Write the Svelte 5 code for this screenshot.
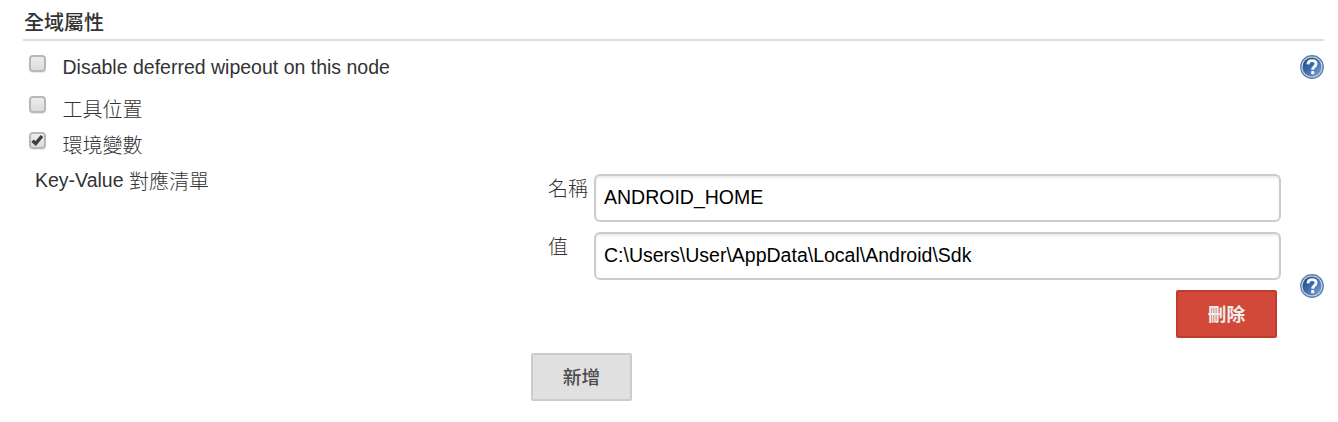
<script>
  let options = $state([
    { label: 'Disable deferred wipeout on this node', checked: false, help: true },
    { label: '工具位置', checked: false, help: false },
    { label: '環境變數', checked: true, help: false }
  ]);
  let name = $state('ANDROID_HOME');
  let value = $state('C:\\Users\\User\\AppData\\Local\\Android\\Sdk');
</script>

{#snippet helpIcon()}
  <svg class="help" width="24" height="24" viewBox="0 0 24 24">
    <defs>
      <linearGradient id="disc" x1="0" y1="0" x2="1" y2="1">
        <stop offset="0" stop-color="#1d4583" />
        <stop offset="0.45" stop-color="#3d68a6" />
        <stop offset="1" stop-color="#86a9d6" />
      </linearGradient>
    </defs>
    <circle cx="12" cy="12" r="11.9" fill="#5b80a8" />
    <circle cx="12" cy="12" r="10.6" fill="#c9d6e6" />
    <circle cx="12" cy="12" r="9.5" fill="url(#disc)" />
    <path d="M7.9 9.3C8.1 6.6 9.6 5.6 12.1 5.6c2.5 0 4 1.2 4 3.2 0 2.8-3.4 3-3.4 5.9" fill="none" stroke="#f4f7fb" stroke-width="2.9" />
    <rect x="11.1" y="16" width="3.2" height="3.2" rx=".9" fill="#f4f7fb" />
  </svg>
{/snippet}

<main>
  <h1>全域屬性</h1>

  {#each options as option}
    <div class="option">
      <label>
        <span class="box">
          <input type="checkbox" bind:checked={option.checked} />
          {#if option.checked}
            <svg class="tick" width="17" height="17" viewBox="0 0 17 17">
              <path d="M3.5 8.7 6.7 11.5 13 4" fill="none" stroke="#3e3e3e" stroke-width="3.4" />
            </svg>
          {/if}
        </span>
        <span class="text">{option.label}</span>
      </label>
      {#if option.help}{@render helpIcon()}{/if}
    </div>
  {/each}

  <section>
    <div class="title">Key-Value <span>對應清單</span></div>
    <div class="editor">
      <div class="field">
        <label for="name">名稱</label>
        <input id="name" type="text" bind:value={name} />
      </div>
      <div class="field">
        <label for="value">值</label>
        <input id="value" type="text" bind:value />
      </div>
      <button class="danger">刪除</button>
      <button class="add">新增</button>
    </div>
    <div class="aside">{@render helpIcon()}</div>
  </section>
</main>

<style>
  :global(body) {
    margin: 0;
    background: #fff;
  }
  main {
    box-sizing: border-box;
    height: 422px;
    padding: 0 14px 0 23px;
    overflow: hidden;
    color: #333;
    font: 19.5px/32px "Liberation Sans", "Noto Sans CJK TC", sans-serif;
  }
  h1 {
    box-sizing: border-box;
    height: 41px;
    margin: 0;
    padding: 7px 0 0 1px;
    border-bottom: 2px solid #ddd;
    font-size: 20px;
    font-weight: 500;
    line-height: 32px;
  }
  .option {
    display: flex;
    align-items: flex-start;
    justify-content: space-between;
    height: 36px;
  }
  .option:nth-of-type(1) {
    height: 41px;
    padding-top: 10px;
  }
  .option label {
    display: flex;
    padding-left: 6px;
  }
  .option:nth-of-type(n + 2) .text {
    padding-top: 2px;
    font-size: 20px;
    font-weight: 300;
  }
  .option:nth-of-type(1) .help {
    margin-top: 4px;
  }
  .box {
    position: relative;
    width: 17px;
    height: 17px;
    margin: 4px 16.5px 0 0;
  }
  .box input {
    appearance: none;
    display: block;
    box-sizing: border-box;
    width: 17px;
    height: 17px;
    margin: 0;
    border: 2px solid #b8b8b8;
    border-radius: 4px;
    background: linear-gradient(#ededed, #dcdcdc);
    box-shadow: 0 1px 1px #e8e8e8;
  }
  .tick {
    position: absolute;
    inset: 0;
    pointer-events: none;
  }
  section {
    display: flex;
    align-items: flex-start;
    padding-top: 10px;
  }
  .title {
    flex: 0 0 508px;
    box-sizing: border-box;
    padding: 0 0 0 12px;
    margin-top: -10px;
  }
  .title span {
    position: relative;
    top: 2px;
    font-size: 20px;
    font-weight: 300;
  }
  .editor {
    display: flex;
    flex: 0 0 750px;
    flex-direction: column;
    align-items: flex-start;
  }
  .field {
    display: flex;
    align-items: flex-start;
    height: 48px;
    margin-bottom: 10px;
  }
  .field label {
    width: 46px;
    margin: -1px 0 0 17px;
    font-size: 20px;
    font-weight: 300;
  }
  .field input {
    box-sizing: border-box;
    width: 687px;
    height: 48px;
    padding: 0 8px 2px;
    border: 2px solid #ccc;
    border-radius: 6px;
    outline: 0;
    background: #fff;
    box-shadow: inset 0 2px 2px rgba(0, 0, 0, 0.075);
    color: #000;
    font: inherit;
  }
  button {
    box-sizing: border-box;
    width: 101px;
    height: 48px;
    padding: 2px 0 0;
    border: 2px solid #ccc;
    border-radius: 2px;
    background: #e0e0e0;
    color: #4d4d4d;
    font: 500 18.7px/42px "Liberation Sans", "Noto Sans CJK TC", sans-serif;
  }
  .danger {
    align-self: flex-end;
    margin: 0 4px 15px 0;
    border-color: #bf3b2c;
    background: #d24939;
    color: #eee;
    font-weight: 700;
  }
  .aside {
    display: flex;
    flex: 1;
    justify-content: flex-end;
    padding-top: 100px;
  }
</style>
